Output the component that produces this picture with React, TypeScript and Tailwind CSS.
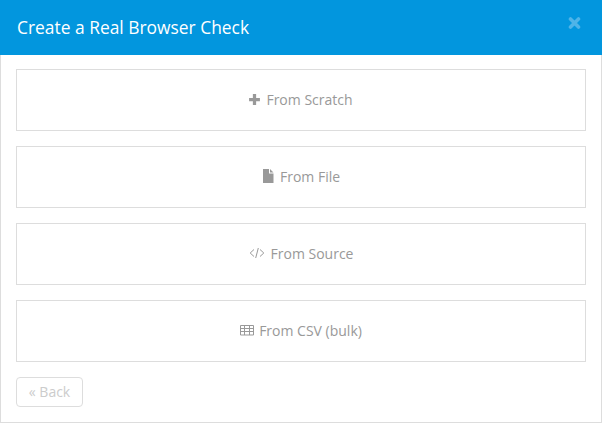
import React from "react";

const Row = ({ icon, label }: { icon: React.ReactNode; label: string }) => (
  <button className="flex h-[62px] w-full items-center justify-center gap-[5px] border border-[#dddddd] bg-white pb-[2px] text-[14px] text-[#999999]">
    {icon}
    <span>{label}</span>
  </button>
);

export default function App() {
  return (
    <div className="flex h-[423px] w-[602px] flex-col bg-white font-['Open_Sans',sans-serif]">
      <div className="flex h-[55px] shrink-0 items-start justify-between bg-[#0296de] pl-[17px] pr-[21px]">
        <span className="mt-[15px] text-[17.4px] leading-[25px] text-white">Create a Real Browser Check</span>
        <svg width="13" height="14" viewBox="0 0 13 13" aria-hidden="true" className="mt-[16px]">
          <path d="M2.5 2.500 L10.500 10.500 M10.500 2.500 L2.500 10.500" stroke="#4fb4e8" strokeWidth="3.600" strokeLinecap="round" />
        </svg>
      </div>
      <div className="flex h-[368px] flex-col gap-[15px] border-x border-b border-[#dddddd] pl-[15px] pr-[15px] pt-[14px]">
        <Row
          label="From Scratch"
          icon={
            <svg width="13" height="13" viewBox="0 0 12 12" aria-hidden="true" className="-ml-[1px]">
              <path d="M4.500 1h3v3.500H11v3H7.500V11h-3V7.500H1v-3h3.500z" fill="#999999" />
            </svg>
          }
        />
        <Row
          label="From File"
          icon={
            <svg width="13" height="14" viewBox="0 0 13 14" aria-hidden="true">
              <path d="M1 0h6v4.500h4.500V14H1z M8 0l3.500 3.500H8z" fill="#999999" />
            </svg>
          }
        />
        <Row
          label="From Source"
          icon={
            <svg width="16" height="12" viewBox="0 0 16 12" fill="none" stroke="#999999" strokeWidth="1" aria-hidden="true" className="mr-[1px]">
              <path d="M5 2.500 1.200 6 5 9.500M11 2.500 14.800 6 11 9.500M9.300 1 6.700 11" />
            </svg>
          }
        />
        <Row
          label="From CSV (bulk)"
          icon={
            <svg width="14" height="12" viewBox="0 0 14 12" fill="none" stroke="#999999" strokeWidth="1" aria-hidden="true">
              <path d="M.5 1.500h13v9.500H.5zM.5 4.500h13M.5 7.500h13M4.500 1.500v9.500M9.500 1.500v9.500" />
            </svg>
          }
        />
        <button className="flex h-[30px] w-[67px] items-center justify-center rounded-[4px] border border-[#dddddd] bg-white pb-[2px] text-[14px] text-[#cccccc]">
          « Back
        </button>
      </div>
    </div>
  );
}
